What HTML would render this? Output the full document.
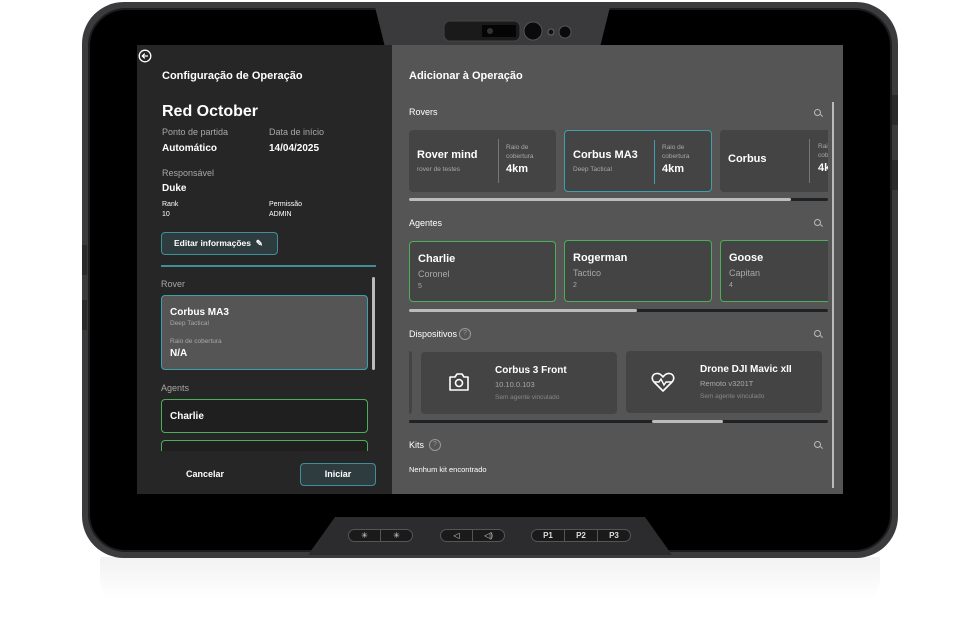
<!DOCTYPE html><html><head><meta charset="utf-8"><style>
*{box-sizing:border-box;margin:0;padding:0}
body{width:980px;height:619px;background:#fff;position:relative;overflow:hidden;font-family:"Liberation Sans",sans-serif;color:#fff}
.a{position:absolute}
.b{font-weight:bold}
.g{color:#a8a8a8}
.t9{font-size:9px}.t7{font-size:7px}.t10{font-size:10px}.t11{font-size:11px}
.card{position:absolute;border-radius:4px}
.sb{position:absolute;height:3px;background:#1f2326;border-radius:2px}
.sb i{position:absolute;top:0;height:3px;background:#bcbcbc;border-radius:2px}
.srch{position:absolute;width:7px;height:7px;border:1.2px solid #bbb;border-radius:50%}
.srch:after{content:"";position:absolute;width:3px;height:1.2px;background:#bbb;right:-3px;bottom:-1px;transform:rotate(45deg)}
.q{position:absolute;width:12px;height:12px;border:1px solid #999;border-radius:50%;font-size:7px;color:#999;text-align:center;line-height:10px}
.btn{position:absolute;height:13px;top:529px;background:#1a1a1a;border:1px solid #555;border-radius:7px;font-size:8px;color:#ddd;text-align:center;line-height:11px;display:flex}
.btn span{flex:1;border-right:1px solid #555}
.btn span:last-child{border-right:none}
</style></head><body>
<!-- reflection -->
<div class="a" style="left:100px;top:557px;width:780px;height:60px;background:linear-gradient(#ececec,#fff 70%);border-radius:0 0 40px 40px;opacity:.7"></div>
<!-- body -->
<div class="a" style="left:82px;top:2px;width:816px;height:556px;background:#3b3b3d;border-radius:42px"></div>
<div class="a" style="left:88px;top:8px;width:804px;height:544px;background:#000;border-radius:38px;border:2px solid #1d1d1d"></div>
<div class="a" style="left:892px;top:95px;width:6px;height:30px;background:#2a2a2a"></div>
<div class="a" style="left:892px;top:160px;width:6px;height:30px;background:#2a2a2a"></div>
<div class="a" style="left:82px;top:245px;width:5px;height:30px;background:#2a2a2a"></div>
<div class="a" style="left:82px;top:300px;width:5px;height:30px;background:#2a2a2a"></div>
<!-- camera -->
<svg class="a" style="left:370px;top:5px" width="245" height="42"><polygon points="5,2 240,2 230,42 15,42" fill="#3a3a3c"/><rect x="74" y="16" width="76" height="20" rx="6" fill="#1a1a1a" stroke="#444"/><rect x="112" y="20" width="34" height="12" fill="#050505"/><circle cx="120" cy="26" r="3" fill="#333"/><circle cx="163" cy="26" r="9" fill="#0a0a0a" stroke="#555"/><circle cx="181" cy="27" r="3" fill="#111" stroke="#666"/><circle cx="195" cy="27" r="6" fill="#0a0a0a" stroke="#555"/></svg>
<!-- bottom bezel -->
<svg class="a" style="left:300px;top:515px" width="380" height="42"><polygon points="35,2 345,2 372,40 8,40" fill="#2c2c2e"/></svg>
<div class="btn" style="left:348px;width:65px"><span>✳</span><span>✳</span></div>
<div class="btn" style="left:440px;width:65px"><span>◁</span><span>◁)</span></div>
<div class="btn b" style="left:531px;width:100px"><span>P1</span><span>P2</span><span>P3</span></div>
<!-- screen -->
<div class="a" style="left:137px;top:45px;width:255px;height:449px;background:#262626"></div>
<div class="a" style="left:392px;top:45px;width:451px;height:449px;background:#555"></div>
<!-- left -->
<svg class="a" style="left:138px;top:49px" width="14" height="14" viewBox="0 0 14 14"><circle cx="7" cy="7" r="5.8" fill="none" stroke="#fff" stroke-width="1.3"/><path d="M10 7H4.5M6.8 4.6 4.3 7l2.5 2.4" fill="none" stroke="#fff" stroke-width="1.3"/></svg>
<div class="a b t11" style="left:162px;top:70px">Configuração de Operação</div>
<div class="a b" style="left:162px;top:103px;font-size:16px">Red October</div>
<div class="a g t9" style="left:162px;top:127px">Ponto de partida</div>
<div class="a g t9" style="left:269px;top:127px">Data de início</div>
<div class="a b t10" style="left:162px;top:143px">Automático</div>
<div class="a b t10" style="left:269px;top:143px">14/04/2025</div>
<div class="a g t9" style="left:162px;top:168px">Responsável</div>
<div class="a b t10" style="left:162px;top:183px">Duke</div>
<div class="a t7" style="left:162px;top:201px">Rank</div><div class="a t7" style="left:162px;top:211px">10</div>
<div class="a t7" style="left:269px;top:201px">Permissão</div><div class="a t7" style="left:269px;top:211px">ADMIN</div>
<div class="a b" style="left:161px;top:232px;width:117px;height:23px;border:1.3px solid #3f8f99;background:#2f3c3f;border-radius:4px;font-size:8.5px;line-height:20px;padding-left:12px">Editar informações &nbsp;✎</div>
<div class="a" style="left:161px;top:265px;width:215px;height:1.5px;background:#3f8f99"></div>
<div class="a g t9" style="left:161px;top:279px">Rover</div>
<div class="a" style="left:372px;top:277px;width:3px;height:93px;background:#bbb;border-radius:2px"></div>
<div class="card" style="left:161px;top:295px;width:207px;height:75px;background:#555;border:1.3px solid #3fa0ab">
<div class="a b t10" style="left:8px;top:11px">Corbus MA3</div>
<div class="a g" style="left:8px;top:24px;font-size:6.5px">Deep Tactical</div>
<div class="a g" style="left:8px;top:42px;font-size:6.5px">Raio de cobertura</div>
<div class="a b t10" style="left:8px;top:52px">N/A</div></div>
<div class="a g t9" style="left:161px;top:383px">Agents</div>
<div class="card" style="left:161px;top:399px;width:207px;height:34px;background:#1f1f1f;border:1.3px solid #4cae5a"><div class="a b t10" style="left:8px;top:11px">Charlie</div></div>
<div class="a" style="left:161px;top:440px;width:207px;height:11px;background:#1f1f1f;border:1.3px solid #4cae5a;border-bottom:none;border-radius:4px 4px 0 0"></div>
<div class="a" style="left:137px;top:451px;width:240px;height:43px;background:#262626"></div>
<div class="a b t9" style="left:186px;top:469px">Cancelar</div>
<div class="a b t9" style="left:300px;top:463px;width:76px;height:23px;border:1.3px solid #3f8f99;background:#2f3c3f;border-radius:4px;text-align:center;line-height:20px">Iniciar</div>
<!-- right -->
<div class="a b t11" style="left:409px;top:70px">Adicionar à Operação</div>
<div class="a" style="left:832px;top:102px;width:2px;height:386px;background:#bbb"></div>
<div class="a t9" style="left:409px;top:107px">Rovers</div><div class="srch" style="left:814px;top:109px"></div>
<div class="a" style="left:409px;top:130px;width:419px;height:63px;overflow:hidden">
<div class="card" style="left:0;top:0;width:147px;height:62px;background:#444"><div class="a b t11" style="left:8px;top:19px">Rover mind</div><div class="a g" style="left:8px;top:36px;font-size:6.5px">rover de testes</div><div class="a" style="left:89px;top:9px;width:1px;height:44px;background:#777"></div><div class="a g" style="left:97px;top:13px;font-size:6.5px;line-height:9px">Raio de<br>cobertura</div><div class="a b t11" style="left:97px;top:33px">4km</div></div>
<div class="card" style="left:155px;top:0;width:148px;height:62px;background:#444;border:1.3px solid #3fa0ab"><div class="a b t11" style="left:8px;top:18px">Corbus MA3</div><div class="a g" style="left:8px;top:35px;font-size:6.5px">Deep Tactical</div><div class="a" style="left:89px;top:9px;width:1px;height:44px;background:#3fa0ab"></div><div class="a g" style="left:97px;top:12px;font-size:6.5px;line-height:9px">Raio de<br>cobertura</div><div class="a b t11" style="left:97px;top:32px">4km</div></div>
<div class="card" style="left:311px;top:0;width:148px;height:62px;background:#444"><div class="a b t11" style="left:8px;top:23px">Corbus</div><div class="a" style="left:89px;top:9px;width:1px;height:44px;background:#777"></div><div class="a g" style="left:98px;top:12px;font-size:6.5px;line-height:9px">Raio de<br>cobertura</div><div class="a b t11" style="left:98px;top:32px">4km</div></div></div>
<div class="sb" style="left:409px;top:198px;width:419px"><i style="left:0;width:382px"></i></div>
<div class="a t9" style="left:409px;top:218px">Agentes</div><div class="srch" style="left:814px;top:219px"></div>
<div class="a" style="left:409px;top:240px;width:419px;height:63px;overflow:hidden">
<div class="card" style="left:0;top:1px;width:147px;height:61px;background:#444;border:1.3px solid #4cae5a"><div class="a b t11" style="left:8px;top:11px">Charlie</div><div class="a g t9" style="left:8px;top:27px">Coronel</div><div class="a g" style="left:8px;top:41px;font-size:7px">5</div></div>
<div class="card" style="left:155px;top:0;width:148px;height:62px;background:#444;border:1.3px solid #4cae5a"><div class="a b t11" style="left:8px;top:11px">Rogerman</div><div class="a g t9" style="left:8px;top:27px">Tactico</div><div class="a g" style="left:8px;top:41px;font-size:7px">2</div></div>
<div class="card" style="left:311px;top:0;width:148px;height:62px;background:#444;border:1.3px solid #4cae5a"><div class="a b t11" style="left:8px;top:11px">Goose</div><div class="a g t9" style="left:8px;top:27px">Capitan</div><div class="a g" style="left:8px;top:41px;font-size:7px">4</div></div></div>
<div class="sb" style="left:409px;top:309px;width:419px"><i style="left:0;width:228px"></i></div>
<div class="a t9" style="left:409px;top:329px">Dispositivos</div><div class="q" style="left:459px;top:328px">?</div><div class="srch" style="left:814px;top:330px"></div>
<div class="a" style="left:409px;top:351px;width:3px;height:63px;background:#444;border-radius:0 4px 4px 0"></div>
<div class="card" style="left:421px;top:352px;width:196px;height:62px;background:#444">
<svg class="a" style="left:27px;top:20px" width="22" height="20" viewBox="0 0 22 20"><path d="M2 5h5l2-3h5l2 3h4v13H2z" fill="none" stroke="#fff" stroke-width="1.6" stroke-linejoin="round"/><circle cx="11" cy="11" r="3.5" fill="none" stroke="#fff" stroke-width="1.6"/></svg>
<div class="a b t10" style="left:74px;top:13px">Corbus 3 Front</div><div class="a g" style="left:74px;top:28px;font-size:7.5px">10.10.0.103</div><div class="a" style="left:74px;top:42px;font-size:6.5px;color:#888">Sem agente vinculado</div></div>
<div class="card" style="left:626px;top:351px;width:196px;height:62px;background:#444">
<svg class="a" style="left:25px;top:20px" width="24" height="22" viewBox="0 0 24 22"><path d="M12 20L3 11C0 8 1 3 5.5 2.5 8.5 2 10.5 4 12 6 13.5 4 15.5 2 18.5 2.5 23 3 24 8 21 11z" fill="none" stroke="#fff" stroke-width="1.6" stroke-linejoin="round"/><path d="M3 11h5l2-3 3 6 2-3h6" fill="none" stroke="#fff" stroke-width="1.4"/></svg>
<div class="a b t10" style="left:74px;top:13px">Drone DJI Mavic xII</div><div class="a g" style="left:74px;top:28px;font-size:7.5px">Remoto v3201T</div><div class="a" style="left:74px;top:42px;font-size:6.5px;color:#888">Sem agente vinculado</div></div>
<div class="sb" style="left:409px;top:420px;width:419px"><i style="left:243px;width:71px"></i></div>
<div class="a t9" style="left:409px;top:440px">Kits</div><div class="q" style="left:429px;top:439px">?</div><div class="srch" style="left:814px;top:441px"></div>
<div class="a t7" style="left:409px;top:465px;font-size:7.5px">Nenhum kit encontrado</div>
</body></html>
